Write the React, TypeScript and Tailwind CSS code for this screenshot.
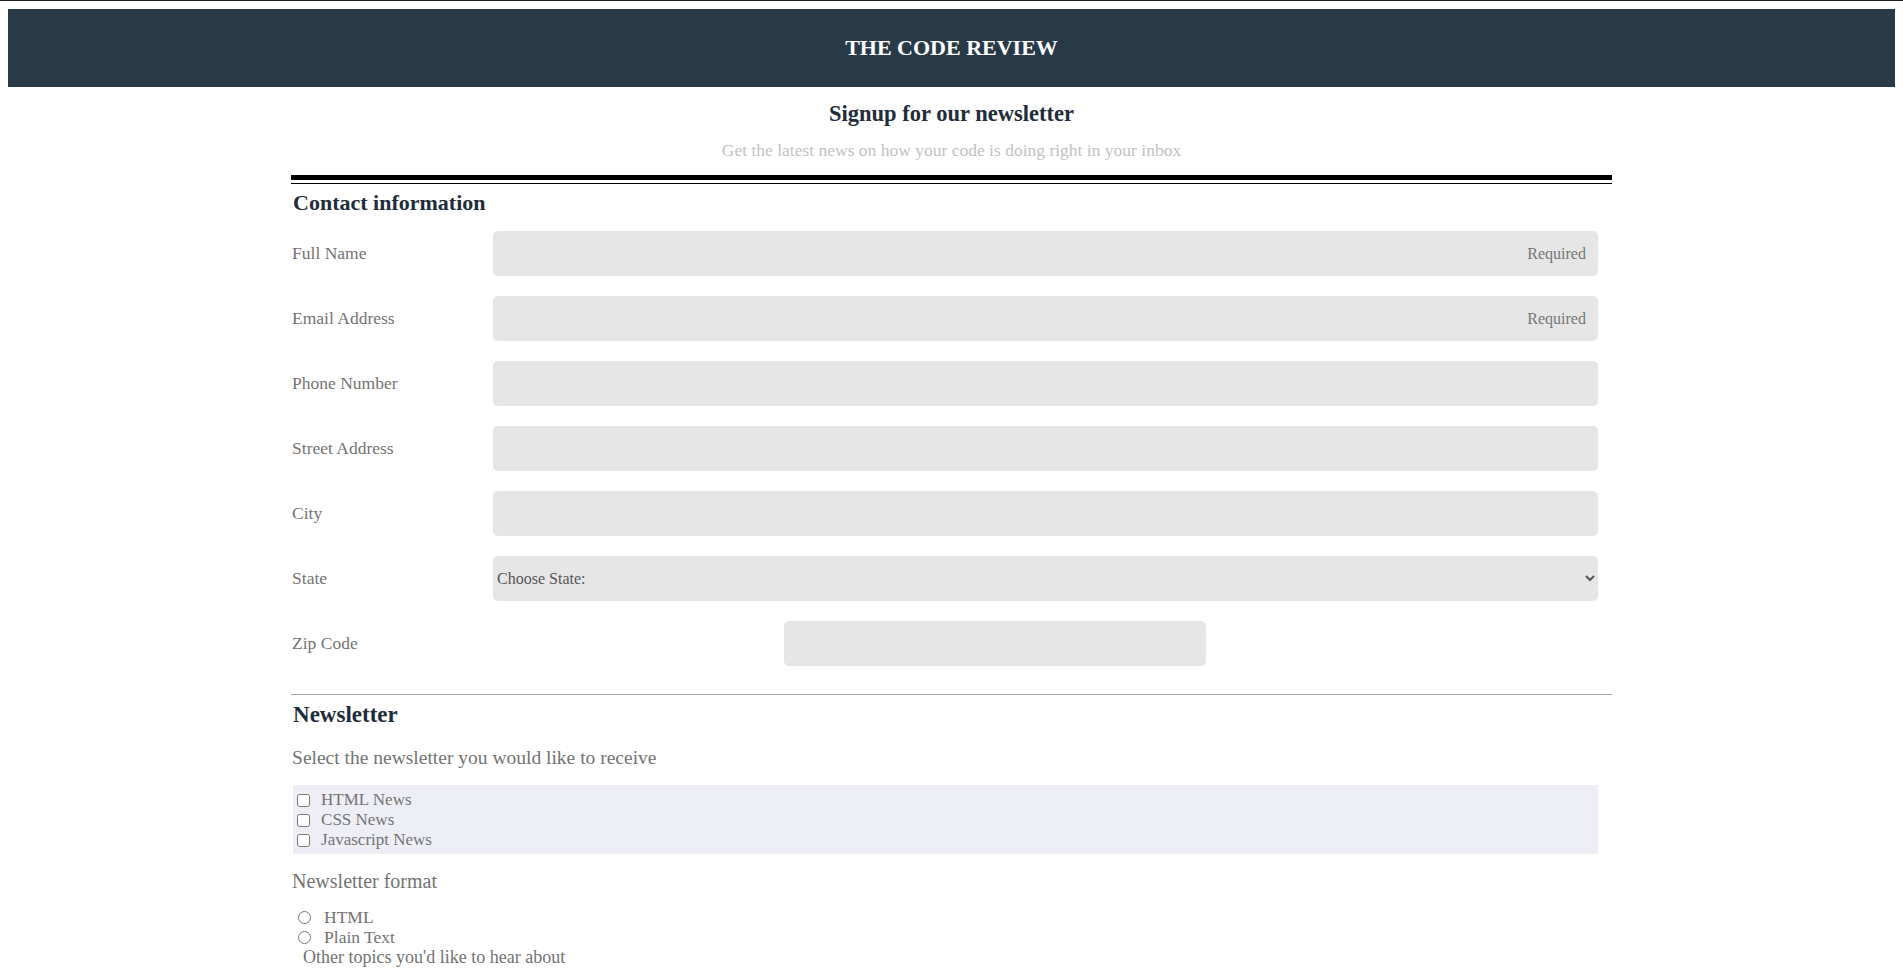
import React from "react";

const fields = [
  { label: "Full Name", placeholder: "Required" },
  { label: "Email Address", placeholder: "Required" },
  { label: "Phone Number", placeholder: "" },
  { label: "Street Address", placeholder: "" },
  { label: "City", placeholder: "" },
];

const newsletters = ["HTML News", "CSS News", "Javascript News"];

export default function App() {
  return (
    <div className="min-h-screen border-t border-[#1e1e1e] bg-white px-2 pt-2 font-['Liberation_Serif',serif] text-[17.5px] text-[#737373]">
      <header className="flex h-[78px] items-center justify-center bg-[#283a48]">
        <h1 className="text-[22px] font-bold leading-none text-white">THE CODE REVIEW</h1>
      </header>

      <main className="mx-auto w-[70%]">
        <div className="pt-[15px] text-center">
          <h2 className="text-[22.5px] font-bold leading-[24px] text-[#1f2d3a]">Signup for our newsletter</h2>
          <p className="mt-[14px] text-[17.5px] leading-[20px] text-[#c2c2c2]">
            Get the latest news on how your code is doing right in your inbox
          </p>
        </div>

        <div className="mt-[15px] h-[5px] bg-black" />
        <div className="mt-[3px] h-px bg-black" />

        <form className="pr-[14px]">
          <h3 className="mt-[7px] px-[2px] text-[22px] font-bold leading-[24px] text-[#1f2d3a]">Contact information</h3>

          <div className="mt-[16px] flex flex-col gap-[20px]">
            {fields.map((f) => (
              <div key={f.label} className="flex items-center">
                <label className="-mt-[2px] w-[202px] shrink-0 pl-px leading-[20px]">{f.label}</label>
                <input
                  type="text"
                  placeholder={f.placeholder}
                  className="h-[45px] flex-1 rounded-[5px] bg-[#e6e6e6] px-3 text-right text-[16px] placeholder:text-[#767676]"
                />
              </div>
            ))}
            <div className="flex items-center">
              <label className="-mt-[2px] w-[202px] shrink-0 pl-px leading-[20px]">State</label>
              <select className="h-[45px] flex-1 rounded-[5px] bg-[#e6e6e6] text-[16px] text-[#555]">
                <option>Choose State:</option>
              </select>
            </div>
            <div className="flex items-center">
              <label className="-mt-[2px] w-[202px] shrink-0 pl-px leading-[20px]">Zip Code</label>
              <input type="text" className="ml-[291px] h-[45px] w-[422px] rounded-[5px] bg-[#e6e6e6]" />
            </div>
          </div>
        </form>

        <div className="mt-[28px] h-px bg-[#a6a6a6]" />

        <section>
          <h3 className="mt-[8px] px-[2px] text-[23px] font-bold leading-[24px] text-[#1f2d3a]">Newsletter</h3>
          <p className="mt-[21px] px-px text-[19.5px] leading-[20px]">Select the newsletter you would like to receive</p>

          <div className="mr-[14px] ml-[2px] mt-[17px] bg-[#eeeef6] pt-[5px] pb-[4px]">
            {newsletters.map((n) => (
              <label key={n} className="flex h-[20px] items-center text-[17px]">
                <input type="checkbox" className="ml-[4px] mr-[11px] h-[13px] w-[13px]" />
                {n}
              </label>
            ))}
          </div>

          <p className="mt-[17px] px-px text-[20px] leading-[20px]">Newsletter format</p>

          <div className="mt-[16px] ml-[2px]">
            {["HTML", "Plain Text"].map((r) => (
              <label key={r} className="flex h-[20px] items-center text-[17.5px]">
                <input type="radio" name="format" className="ml-[5px] mr-[13px] h-[13px] w-[13px]" />
                {r}
              </label>
            ))}
            <p className="h-[20px] pl-[10px] text-[18px] leading-[20px]">Other topics you'd like to hear about</p>
          </div>
        </section>
      </main>
    </div>
  );
}
